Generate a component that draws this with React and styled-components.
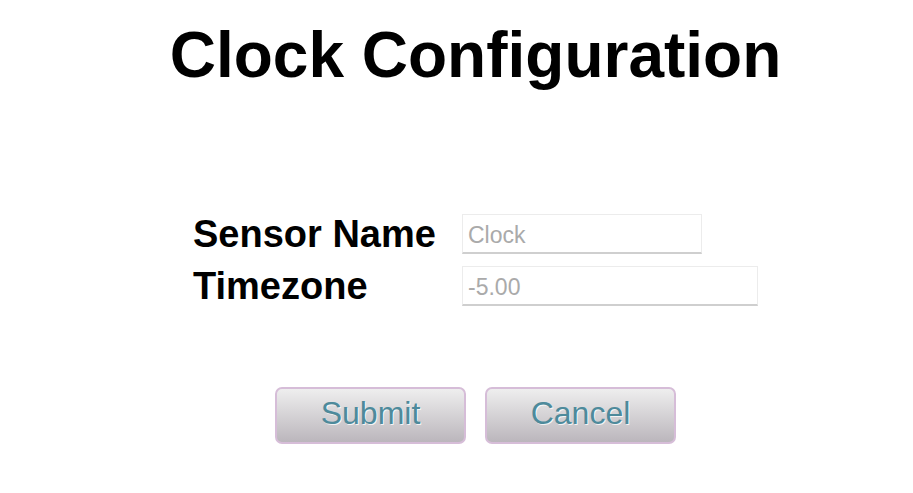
import React from "react"
import styled, { createGlobalStyle } from "styled-components"

const GlobalStyle = createGlobalStyle`
        html, body {
                margin: 0;
                padding: 0;
                background: #ffffff;
                font-family: "Liberation Sans", Arial, sans-serif;
        }
`

const Page = styled.div`
        padding-left: 38px;
        display: flex;
        flex-direction: column;
        align-items: center;
`

const Title = styled.h1`
        margin: 18px 0 0;
        font-size: 64px;
        font-weight: bold;
        color: #000;
        line-height: normal;
`

const Form = styled.div`
        margin-top: 122px;
        display: grid;
        grid-template-columns: 243px auto;
        column-gap: 26px;
        row-gap: 12px;
        align-items: center;
        width: 565px;
`

const Label = styled.label`
        font-size: 38px;
        font-weight: bold;
        color: #000;
        line-height: 40px;
        white-space: nowrap;
`

const Field = styled.input`
        box-sizing: border-box;
        width: ${(p) => p.$w}px;
        height: 40px;
        padding: 4px 5px 0;
        border: 1px solid #ececec;
        border-bottom: 2px solid #cfcfcf;
        border-radius: 0;
        font-family: "Liberation Sans", Arial, sans-serif;
        font-size: 23px;
        color: #aaaaaa;
        outline: none;
        background: #fff;
        &::placeholder {
                color: #aaaaaa;
        }
`

const Buttons = styled.div`
        margin-top: 81px;
        display: flex;
        gap: 19px;
`

const Button = styled.button`
        box-sizing: border-box;
        width: 191px;
        height: 57px;
        border: 2px solid #d6bdd8;
        border-radius: 7px;
        background: linear-gradient(#eeeeee, #bbb6bc);
        font-family: "Liberation Sans", Arial, sans-serif;
        font-size: 32px;
        color: #4e8a9b;
        text-shadow: 1px 1px 0 rgba(255, 255, 255, 0.8);
        cursor: pointer;
        padding: 0 0 5px;
`

export default function App() {
        return (
                <>
                        <GlobalStyle />
                        <Page>
                                <Title>Clock Configuration</Title>
                                <Form>
                                        <Label>Sensor Name</Label>
                                        <Field $w={240} placeholder="Clock" />
                                        <Label>Timezone</Label>
                                        <Field $w={296} placeholder="-5.00" />
                                </Form>
                                <Buttons>
                                        <Button>Submit</Button>
                                        <Button>Cancel</Button>
                                </Buttons>
                        </Page>
                </>
        )
}
